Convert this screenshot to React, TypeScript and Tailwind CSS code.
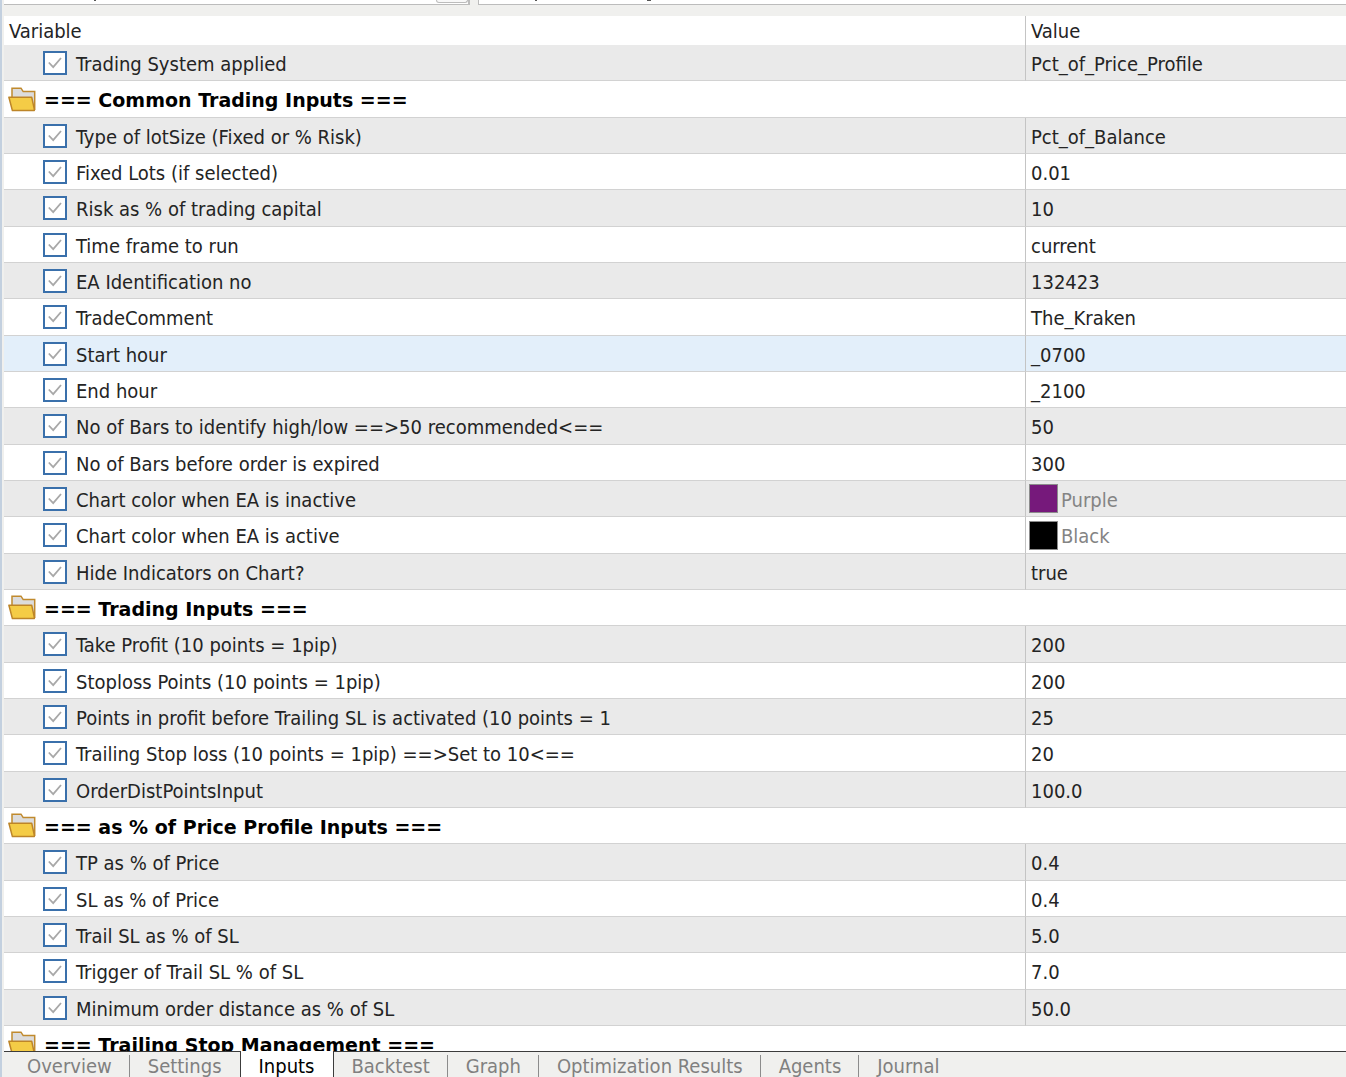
import React, { useState } from 'react';
import clsx from 'clsx';

interface InputRow {
  name: string;
  value?: string;
  swatch?: string;
  section?: boolean;
}

const ROWS: InputRow[] = [
  { name: 'Trading System applied', value: 'Pct_of_Price_Profile' },
  { name: '=== Common Trading Inputs ===', section: true },
  { name: 'Type of lotSize (Fixed or % Risk)', value: 'Pct_of_Balance' },
  { name: 'Fixed Lots (if selected)', value: '0.01' },
  { name: 'Risk as % of trading capital', value: '10' },
  { name: 'Time frame to run', value: 'current' },
  { name: 'EA Identification no', value: '132423' },
  { name: 'TradeComment', value: 'The_Kraken' },
  { name: 'Start hour', value: '_0700' },
  { name: 'End hour', value: '_2100' },
  { name: 'No of Bars to identify high/low ==>50 recommended<==', value: '50' },
  { name: 'No of Bars before order is expired', value: '300' },
  { name: 'Chart color when EA is inactive', value: 'Purple', swatch: 'bg-[#76197b]' },
  { name: 'Chart color when EA is active', value: 'Black', swatch: 'bg-black' },
  { name: 'Hide Indicators on Chart?', value: 'true' },
  { name: '=== Trading Inputs ===', section: true },
  { name: 'Take Profit (10 points = 1pip)', value: '200' },
  { name: 'Stoploss Points (10 points = 1pip)', value: '200' },
  { name: 'Points in profit before Trailing SL is activated (10 points = 1', value: '25' },
  { name: 'Trailing Stop loss (10 points = 1pip) ==>Set to 10<==', value: '20' },
  { name: 'OrderDistPointsInput', value: '100.0' },
  { name: '=== as % of Price Profile Inputs ===', section: true },
  { name: 'TP as % of Price', value: '0.4' },
  { name: 'SL as % of Price', value: '0.4' },
  { name: 'Trail SL as % of SL', value: '5.0' },
  { name: 'Trigger of Trail SL % of SL', value: '7.0' },
  { name: 'Minimum order distance as % of SL', value: '50.0' },
  { name: '=== Trailing Stop Management ===', section: true },
];

const TABS = ['Overview', 'Settings', 'Inputs', 'Backtest', 'Graph', 'Optimization Results', 'Agents', 'Journal'];

const FolderIcon: React.FC = () => (
  <svg width="28" height="25" viewBox="0 0 28 25" fill="none" className="shrink-0" aria-hidden="true">
    <path d="M4 10V1.2h9l2.2 3.4H26.7V23" fill="#dcdcdc" stroke="#c08a2e" strokeWidth="1.5" />
    <path d="M.9 10.2h22.8l2.6 12v1.4H4.4z" fill="#f4cc46" stroke="#bd8528" strokeWidth="1.5" strokeLinejoin="round" />
  </svg>
);

const TickBox: React.FC<{ id: string }> = ({ id }) => (
  <span className="relative grid h-6 w-6 shrink-0">
    <input id={id} type="checkbox" defaultChecked className="peer h-6 w-6 appearance-none border-2 border-[#3a70ab] bg-white" />
    <svg viewBox="0 0 24 24" className="pointer-events-none absolute inset-0 hidden h-6 w-6 peer-checked:block" fill="none" stroke="#a8a8a8" strokeWidth="1.8" aria-hidden="true">
      <path d="M5.8 11.5l4.4 4.7L18 7" />
    </svg>
  </span>
);

const App: React.FC = () => {
  const [selected, setSelected] = useState('Start hour');
  const [tab, setTab] = useState('Inputs');

  return (
    <div className="flex h-screen flex-col overflow-hidden border-l-2 border-[#c3d0df] bg-[#f0f0ee] pl-0.5 font-['DejaVu_Sans_Condensed','Noto_Sans',sans-serif] text-[20px] leading-7 text-[#242424]">
      {/* bottom edge of the toolbar drop-downs */}
      <div className="flex h-4 shrink-0 items-start gap-2" aria-hidden="true">
        <div className="relative flex h-[5px] w-[466px] justify-end border-r-2 border-b border-[#bcbcbc] bg-white">
          <span className="absolute top-0 left-[90px] h-px w-0.5 bg-[#555]" />
          <span className="h-[3px] w-8 rounded-b border-x border-b border-[#bcbcbc] bg-[#f8f8f8]" />
        </div>
        <div className="relative h-[5px] flex-1 border-b border-l border-[#bcbcbc] bg-white">
          <span className="absolute top-0 left-14 h-px w-0.5 bg-[#555]" />
          <span className="absolute top-0 left-42 h-px w-1 bg-[#555]" />
        </div>
      </div>

      <div className="min-h-0 flex-1 overflow-hidden bg-white">
        <table className="w-full table-fixed border-separate border-spacing-0 text-left">
          <thead>
            <tr className="h-[29px]">
              <th className="p-0 pl-[5px] font-normal">Variable</th>
              <th className="w-[321px] border-l border-[#c4c4c4] p-0 pl-[5px] font-normal">Value</th>
            </tr>
          </thead>
          <tbody>
            {ROWS.map((row, i) => (
              <tr
                key={row.name}
                onClick={() => !row.section && setSelected(row.name)}
                className={clsx('h-9 nth-[3n+2]:h-[37px]', selected === row.name ? 'bg-[#e3effa]' : 'odd:bg-[#eaeaea]')}
              >
                {row.section ? (
                  <td colSpan={2} className="border-b border-[#d2d2d2] p-0">
                    <div className="flex items-center gap-2 pl-1 font-['DejaVu_Sans',sans-serif] text-[19px] font-bold text-black">
                      <FolderIcon />
                      <span className="pt-0.5">{row.name}</span>
                    </div>
                  </td>
                ) : (
                  <>
                    <td className="border-b border-[#d2d2d2] p-0">
                      <div className="flex items-center gap-[9px] pl-[39px]">
                        <TickBox id={`input-${i}`} />
                        <label htmlFor={`input-${i}`} className="pt-0.5 whitespace-nowrap">{row.name}</label>
                      </div>
                    </td>
                    <td className="border-b border-l border-b-[#d2d2d2] border-l-[#c4c4c4] p-0">
                      {row.swatch ? (
                        <div className="flex items-center gap-[3px] pl-[3px] text-[#848484]">
                          <span className={clsx('h-[29px] w-[29px] border border-[#8c8c8c]', row.swatch)} />
                          <span className="pt-0.5">{row.value}</span>
                        </div>
                      ) : (
                        <div className="pt-0.5 pl-[5px]">{row.value}</div>
                      )}
                    </td>
                  </>
                )}
              </tr>
            ))}
          </tbody>
        </table>
      </div>

      <div role="tablist" className="flex h-[26px] shrink-0 border-t border-[#3c3c3c] text-[#808080]">
        {TABS.map((name, i) => {
          const active = name === tab;
          const ruled = !active && i < TABS.length - 1 && TABS[i + 1] !== tab;
          return (
            <button
              key={name}
              role="tab"
              aria-selected={active}
              onClick={() => setTab(name)}
              className={clsx(
                'relative px-[18px] whitespace-nowrap',
                active && '-mt-px border-x border-[#3c3c3c] bg-white pt-px text-black',
                i === 0 && 'pl-[23px]'
              )}
            >
              {name}
              {ruled && <span className="absolute top-[3px] right-0 bottom-0 w-px bg-[#8c8c8c]" />}
            </button>
          );
        })}
      </div>
    </div>
  );
};

export default App;
